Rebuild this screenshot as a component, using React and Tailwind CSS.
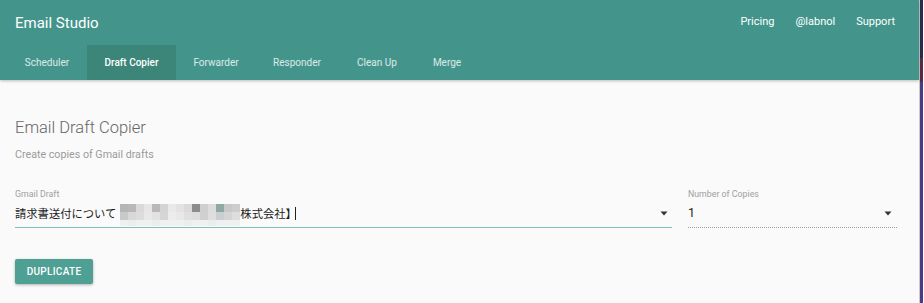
import React from 'react';

const tabs = [
    { name: 'Scheduler', w: 'w-[80px]' },
    { name: 'Draft Copier', w: 'w-[89px]', active: true },
    { name: 'Forwarder', w: 'w-[80px]' },
    { name: 'Responder', w: 'w-[82px]' },
    { name: 'Clean Up', w: 'w-[78px]' },
    { name: 'Merge', w: 'w-[62px]' },
];

// pixelated (blurred) part of the draft subject
const mosaic = [
    ['#b5b5b5', '#b8b8b8', '#d9d9d9', '#e6e6e6', '#b9b9b9', '#d4d4d4', '#e9e9e9', '#e2e2e2', '#dadada', '#8c8c8c', '#cfcfcf', '#dcdcdc', '#8fa8a4', '#c8c8c8', '#cdcdcd'],
    ['#c9c9c9', '#d8d8d8', '#dcdcdc', '#e8e8e8', '#e2e2e2', '#d6d6d6', '#ececec', '#e8e8e8', '#e0e0e0', '#dddddd', '#d0d0d0', '#dedede', '#c9cfcf', '#d5d5d5', '#dedede'],
    ['#eef1f0', '#e9eeec', '#eef1f0', '#eef1f0', '#e9eeec', '#eef1f0', '#eef1f0', '#eef1f0', '#e9eeec', '#eef1f0', '#eef1f0', '#e9eeec', '#eef1f0', '#eef1f0', '#eef1f0'],
];

function Caret() {
    return (
        <svg width="8" height="5" viewBox="0 0 8 5" className="block">
            <path d="M0.5 0.5 L7.5 0.5 L4 4.5 Z" fill="#333" />
        </svg>
    );
}

export default function App() {
    return (
        <div className="flex w-[924px] h-[303px] overflow-hidden bg-[#fafafa] font-['Roboto','Liberation_Sans',sans-serif]">
            <div className="w-[920px] flex flex-col border-r border-[#c8c8c8]">
                <header className="bg-[#43958b] text-white shadow-[0_1px_3px_rgba(0,0,0,0.25)] relative z-10">
                    <div className="h-[45px] flex items-center justify-between pl-[15px] pr-[24px]">
                        <div className="text-[15px] leading-[20px]">Email Studio</div>
                        <nav className="flex gap-[21px] text-[11px]">
                            <span>Pricing</span>
                            <span>@labnol</span>
                            <span>Support</span>
                        </nav>
                    </div>
                    <div className="h-[35px] flex pl-[7px]">
                        {tabs.map((t) => (
                            <div
                                key={t.name}
                                className={`${t.w} flex items-center justify-center text-[10px] ${t.active ? 'bg-[#3b8579] text-white font-medium' : 'text-white/80'}`}
                            >
                                {t.name}
                            </div>
                        ))}
                    </div>
                </header>

                <main className="flex-1 pl-[15px] pr-[22px]">
                    <h1 className="mt-[37px] text-[16.5px] leading-[21px] font-light text-[#666]">Email Draft Copier</h1>
                    <p className="mt-[10px] text-[10.7px] leading-[14px] text-[#9a9a9a]">Create copies of Gmail drafts</p>

                    <div className="mt-[27px] flex gap-[16px]">
                        <div className="flex-1">
                            <div className="text-[8.8px] leading-[10px] text-[#a0a0a0]">Gmail Draft</div>
                            <div className="mt-[3px] h-[26px] flex items-start border-b border-[#80c0b6] font-['Noto_Sans_CJK_JP',sans-serif] text-[11.3px] leading-[20px] text-[#1a1a1a]">
                                <span className="mt-[1px]">請求書送付について</span>
                                <div className="ml-[4px] mt-[2px] flex flex-col">
                                    {mosaic.map((row, r) => (
                                        <div key={r} className={`flex ${r === 2 ? 'h-[6px]' : 'h-[8px]'}`}>
                                            {row.map((c, i) => (
                                                <div key={i} className="w-[8px] h-full" style={{ backgroundColor: c }} />
                                            ))}
                                        </div>
                                    ))}
                                </div>
                                <span className="mt-[1px]">株式会社】</span>
                                <span className="ml-[-2px] mt-[5px] w-px h-[13px] bg-[#222]" />
                                <span className="ml-auto mr-[4px] mt-[9px]"><Caret /></span>
                            </div>
                        </div>
                        <div className="w-[209px]">
                            <div className="text-[8.8px] leading-[10px] text-[#a0a0a0]">Number of Copies</div>
                            <div className="mt-[3px] h-[26px] flex items-start border-b border-dotted border-[#9a9a9a] text-[12.5px] leading-[20px] text-[#222]">
                                <span className="mt-[1px]">1</span>
                                <span className="ml-auto mr-[5px] mt-[9px]"><Caret /></span>
                            </div>
                        </div>
                    </div>

                    <button className="mt-[31px] w-[78px] h-[25px] rounded-[2px] bg-[#4e9f94] text-white text-[10px] font-medium tracking-[0.3px] shadow-[0_1px_3px_rgba(0,0,0,0.3)]">
                        DUPLICATE
                    </button>
                </main>
            </div>
            <div className="w-[3px] flex flex-col">
                <div className="h-[58px] bg-[#2c2a4e]" />
                <div className="h-[24px] bg-[#5a2c44]" />
                <div className="flex-1 bg-[#4a3b86]" />
            </div>
        </div>
    );
}
